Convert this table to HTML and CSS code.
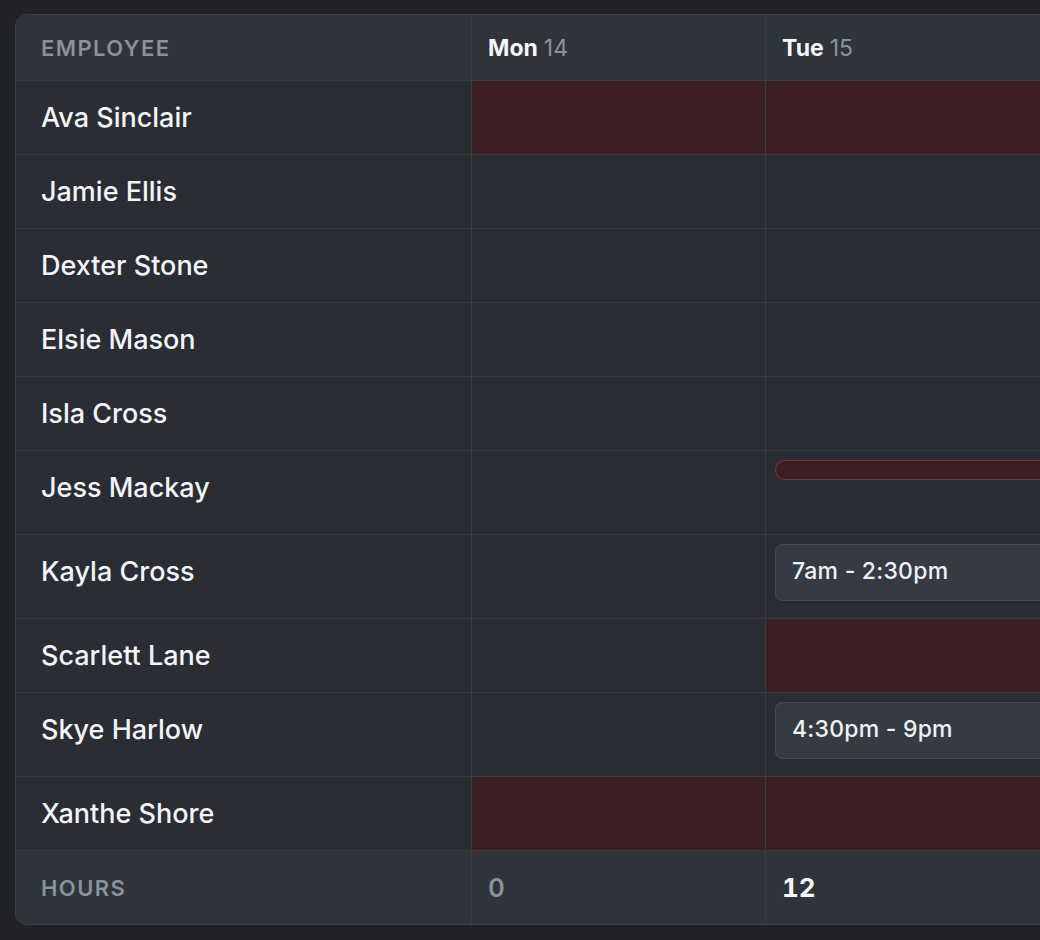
FILE: index.html
```html
<!DOCTYPE html>
<html lang="en">
<head>
<meta charset="utf-8">
<title>Schedule</title>
<link rel="stylesheet" href="styles.css">
</head>
<body>
<div class="page">
  <div class="card">
    <div class="grid">
      <div class="cell head emp-head">Employee</div>
      <div class="cell head day-head"><span class="dow">Mon</span><span class="dnum">14</span></div>
      <div class="cell head day-head"><span class="dow">Tue</span><span class="dnum">15</span></div>

      <div class="cell name">Ava Sinclair</div>
      <div class="cell day off"></div>
      <div class="cell day off"></div>

      <div class="cell name">Jamie Ellis</div>
      <div class="cell day"></div>
      <div class="cell day"></div>

      <div class="cell name">Dexter Stone</div>
      <div class="cell day"></div>
      <div class="cell day"></div>

      <div class="cell name">Elsie Mason</div>
      <div class="cell day"></div>
      <div class="cell day"></div>

      <div class="cell name">Isla Cross</div>
      <div class="cell day"></div>
      <div class="cell day"></div>

      <div class="cell name tall">Jess Mackay</div>
      <div class="cell day tall"></div>
      <div class="cell day tall"><div class="leave"></div></div>

      <div class="cell name tall">Kayla Cross</div>
      <div class="cell day tall"></div>
      <div class="cell day tall"><div class="shift">7am - 2:30pm</div></div>

      <div class="cell name">Scarlett Lane</div>
      <div class="cell day"></div>
      <div class="cell day off"></div>

      <div class="cell name tall">Skye Harlow</div>
      <div class="cell day tall"></div>
      <div class="cell day tall"><div class="shift">4:30pm - 9pm</div></div>

      <div class="cell name">Xanthe Shore</div>
      <div class="cell day off"></div>
      <div class="cell day off"></div>

      <div class="cell foot emp-head">Hours</div>
      <div class="cell foot hours zero">0</div>
      <div class="cell foot hours">12</div>
    </div>
  </div>
</div>
</body>
</html>
```

FILE: styles.css
```css
html, body {
  margin: 0;
  padding: 0;
  overflow: hidden;
  background: #222327;
}

body {
  font-family: Inter, "Noto Sans", "Liberation Sans", sans-serif;
  color: #f3f4f6;
}

.page {
  padding: 14px 0 0 15px;
  width: 1200px;
}

.card {
  display: inline-block;
  border: 1px solid #3b3f46;
  border-radius: 12px;
  overflow: hidden;
  background: #2a2d34;
}

.grid {
  display: grid;
  grid-template-columns: 456px 294px 294px;
}

.cell {
  box-sizing: border-box;
  border-right: 1px solid #383c43;
  border-bottom: 1px solid #383c43;
  min-height: 74px;
}

.head {
  height: 66px;
  min-height: 0;
  background: #2f333a;
  display: flex;
  align-items: center;
}

.emp-head {
  padding-left: 25px;
  font-size: 22px;
  font-weight: 600;
  letter-spacing: 0.065em;
  text-transform: uppercase;
  color: #8a919b;
}

.day-head {
  padding-left: 16px;
  font-size: 23px;
}

.dow {
  font-weight: 700;
  color: #f5f6f8;
}

.dnum {
  margin-left: 6px;
  font-weight: 400;
  color: #8a919b;
}

.name {
  padding: 18px 0 0 25px;
  font-size: 27px;
  line-height: 37px;
  font-weight: 500;
  color: #f3f4f6;
}

.tall {
  min-height: 84px;
}

.day {
  padding: 9px 0 0 9px;
  background: #2a2d34;
}

.off {
  background: #3b1f23;
}

.leave {
  box-sizing: border-box;
  height: 20px;
  border: 1px solid #7a3434;
  border-right: none;
  border-radius: 10px 0 0 10px;
  background: #3b1f23;
}

.shift {
  box-sizing: border-box;
  height: 57px;
  padding: 0 0 3px 16px;
  display: flex;
  align-items: center;
  border: 1px solid #474b53;
  border-right: none;
  border-radius: 8px 0 0 8px;
  background: #363a42;
  font-size: 23px;
  letter-spacing: 0.01em;
  font-weight: 500;
  color: #eef0f3;
}

.foot {
  height: 73px;
  min-height: 0;
  border-bottom: none;
  background: #2f333a;
  display: flex;
  align-items: center;
}

.hours {
  padding-left: 16px;
  font-size: 26px;
  font-weight: 700;
  font-variant-numeric: tabular-nums;
  color: #f5f6f8;
}

.hours.zero {
  font-weight: 600;
  color: #8a919b;
}
```
